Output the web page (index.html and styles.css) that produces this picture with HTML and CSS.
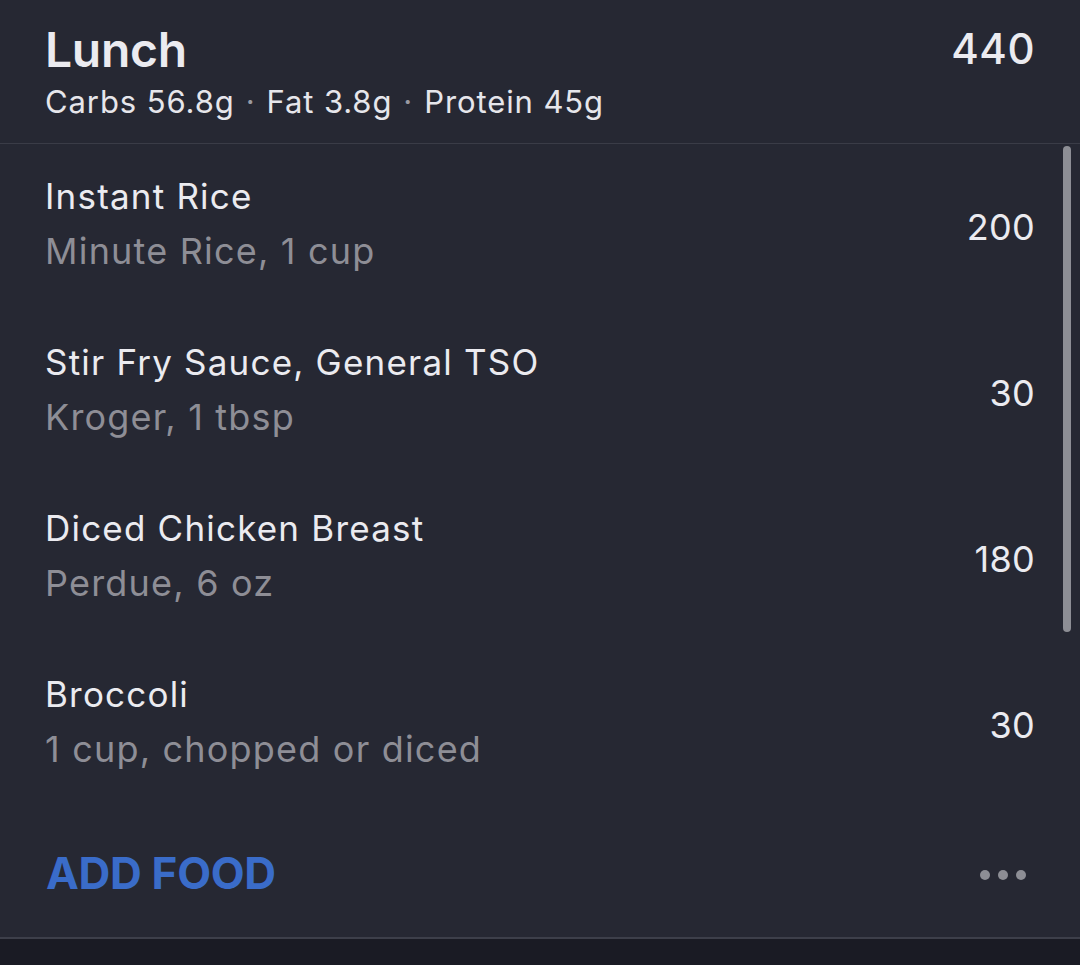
FILE: index.html
```html
<!DOCTYPE html>
<html lang="en">
<head>
<meta charset="utf-8">
<title>Lunch</title>
<link rel="stylesheet" href="styles.css">
</head>
<body>
<div class="screen">
  <section class="meal">
    <header class="meal-header">
      <div class="meal-info">
        <h1 class="meal-title">Lunch</h1>
        <div class="macros">Carbs 56.8g<span class="dot">·</span>Fat 3.8g<span class="dot">·</span>Protein 45g</div>
      </div>
      <div class="meal-total">440</div>
    </header>
    <div class="list">
      <div class="item">
        <div class="item-text">
          <div class="item-name">Instant Rice</div>
          <div class="item-sub">Minute Rice, 1 cup</div>
        </div>
        <div class="item-cal">200</div>
      </div>
      <div class="item">
        <div class="item-text">
          <div class="item-name">Stir Fry Sauce, General TSO</div>
          <div class="item-sub">Kroger, 1 tbsp</div>
        </div>
        <div class="item-cal">30</div>
      </div>
      <div class="item">
        <div class="item-text">
          <div class="item-name">Diced Chicken Breast</div>
          <div class="item-sub">Perdue, 6 oz</div>
        </div>
        <div class="item-cal">180</div>
      </div>
      <div class="item">
        <div class="item-text">
          <div class="item-name">Broccoli</div>
          <div class="item-sub">1 cup, chopped or diced</div>
        </div>
        <div class="item-cal">30</div>
      </div>
      <div class="scrollbar"></div>
    </div>
    <footer class="meal-footer">
      <span class="add-food">ADD FOOD</span>
      <span class="more"><i></i><i></i><i></i></span>
    </footer>
  </section>
  <div class="bottom"></div>
</div>
</body>
</html>
```

FILE: styles.css
```css
* { box-sizing: border-box; margin: 0; padding: 0; }
html, body { width: 1080px; height: 965px; overflow: hidden; }
body {
  background: #1a1b24;
  font-family: "Inter", "Noto Sans", "Liberation Sans", sans-serif;
  color: #ebebf0;
}
.screen { display: flex; flex-direction: column; height: 965px; }
.meal { background: #262833; border-bottom: 2px solid #3d3f4a; }
.meal-header {
  display: flex;
  justify-content: space-between;
  align-items: flex-start;
  padding: 20px 45px 0 45px;
  height: 144px;
  border-bottom: 1px solid #3a3c47;
}
.meal-title {
  font-size: 48px;
  font-weight: 600;
  line-height: 60px;
  letter-spacing: -0.3px;
}
.macros {
  font-size: 31px;
  line-height: 40px;
  margin-top: 2px;
  color: #e6e6eb;
  letter-spacing: 0.9px;
}
.macros .dot { color: #9a9aa2; margin: 0 11px; }
.meal-total {
  font-size: 42px;
  font-weight: 500;
  line-height: 60px;
  letter-spacing: 0.5px;
  margin-top: -1px;
}
.list { position: relative; }
.item {
  height: 166px;
  display: flex;
  justify-content: space-between;
  align-items: center;
  padding: 0 45px 0 45px;
}
.item-text { display: flex; flex-direction: column; gap: 15px; margin-top: -7px; }
.item-name { font-size: 35px; line-height: 40px; color: #ebebf0; letter-spacing: 1.2px; }
.item-sub { font-size: 36px; line-height: 40px; color: #8e8e96; letter-spacing: 1.2px; }
.item-cal { font-size: 36px; line-height: 40px; color: #ebebf0; letter-spacing: 0.3px; }
.scrollbar {
  position: absolute;
  right: 9px;
  top: 2px;
  width: 8px;
  height: 486px;
  border-radius: 4px;
  background: #8d8e95;
}
.meal-footer {
  height: 129px;
  display: flex;
  justify-content: space-between;
  align-items: center;
  padding: 0 54px 0 46px;
}
.add-food {
  font-size: 44px;
  font-weight: 700;
  color: #3a6cc9;
  letter-spacing: -0.3px;
}
.more { display: flex; gap: 8px; margin-top: 4px; }
.more i { width: 10px; height: 10px; border-radius: 50%; background: #8d8e95; display: block; }
.bottom { flex: 1; background: #1a1b24; }
```
